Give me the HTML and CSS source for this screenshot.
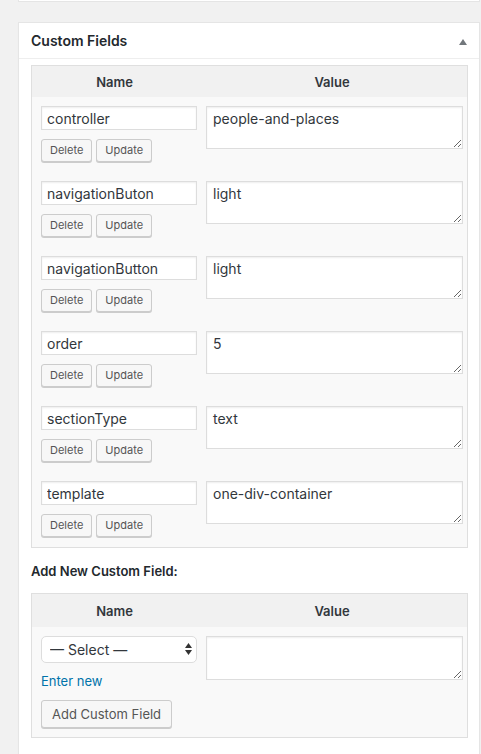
FILE: index.html
```html
<!DOCTYPE html>
<html lang="en">
<head>
<meta charset="utf-8">
<title>Custom Fields</title>
<link rel="stylesheet" href="styles.css">
</head>
<body>
<div class="topbox"></div>
<div class="postbox">
  <h2 class="hndle">
    <span>Custom Fields</span>
    <svg class="toggle" width="8" height="6" viewBox="0 0 8 6"><polygon points="0,6 4,0 8,6" fill="#72777c"/></svg>
  </h2>
  <div class="inside">
    <div class="list">
      <div class="thead"><div>Name</div><div>Value</div></div>
      <div class="row">
        <div class="left"><input class="key" type="text" value="controller"><div class="actions"><button class="btn small">Delete</button><button class="btn small">Update</button></div></div>
        <textarea class="val">people-and-places</textarea>
      </div>
      <div class="row">
        <div class="left"><input class="key" type="text" value="navigationButon"><div class="actions"><button class="btn small">Delete</button><button class="btn small">Update</button></div></div>
        <textarea class="val">light</textarea>
      </div>
      <div class="row">
        <div class="left"><input class="key" type="text" value="navigationButton"><div class="actions"><button class="btn small">Delete</button><button class="btn small">Update</button></div></div>
        <textarea class="val">light</textarea>
      </div>
      <div class="row">
        <div class="left"><input class="key" type="text" value="order"><div class="actions"><button class="btn small">Delete</button><button class="btn small">Update</button></div></div>
        <textarea class="val">5</textarea>
      </div>
      <div class="row">
        <div class="left"><input class="key" type="text" value="sectionType"><div class="actions"><button class="btn small">Delete</button><button class="btn small">Update</button></div></div>
        <textarea class="val">text</textarea>
      </div>
      <div class="row">
        <div class="left"><input class="key" type="text" value="template"><div class="actions"><button class="btn small">Delete</button><button class="btn small">Update</button></div></div>
        <textarea class="val">one-div-container</textarea>
      </div>
    </div>
    <p class="addnew">Add New Custom Field:</p>
    <div class="list">
      <div class="thead tall"><div>Name</div><div>Value</div></div>
      <div class="row new">
        <div class="left">
          <div class="selectwrap">
            <select class="sel"><option>— Select —</option></select>
            <svg class="updown" width="7" height="12" viewBox="0 0 7 12"><polygon points="0,5 3.5,0 7,5" fill="#333"/><polygon points="0,7 3.5,12 7,7" fill="#333"/></svg>
          </div>
          <a class="enternew" href="#">Enter new</a>
          <div><button class="btn">Add Custom Field</button></div>
        </div>
        <textarea class="val tall"></textarea>
      </div>
    </div>
  </div>
</div>
</body>
</html>
```

FILE: styles.css
```css
* { box-sizing: border-box; }
html, body { margin: 0; }
body {
  background: #f1f1f1;
  padding: 0 1px 0 18px;
  font-family: Inter, "Liberation Sans", sans-serif;
  color: #444;
}
.topbox {
  width: 462px;
  height: 2px;
  background: #fff;
  border: 1px solid #e5e5e5;
  border-top: 0;
}
.postbox {
  margin-top: 20px;
  width: 462px;
  background: #fff;
  border: 1px solid #e5e5e5;
  box-shadow: 0 1px 1px rgba(0,0,0,.04);
}
.hndle {
  margin: 0;
  height: 36px;
  border-bottom: 1px solid #eee;
  display: flex;
  align-items: center;
  justify-content: space-between;
  padding: 0 12px;
  font-size: 14px;
  font-weight: 600;
  color: #23282d;
}
.toggle { margin-top: 2px; }
.inside { padding: 6px 11px 30px 12px; }
.list {
  width: 437px;
  border: 1px solid #dfdfdf;
  background: #f9f9f9;
}
.thead {
  display: grid;
  grid-template-columns: 165px 1fr;
  height: 31px;
  align-items: center;
  text-align: center;
  background: #f1f1f1;
  font-size: 13px;
  font-weight: 600;
  color: #32373c;
}
.thead.tall { height: 33px; }
.row {
  display: flex;
  gap: 9px;
  height: 75px;
  padding: 9px 0 0 9px;
}
.row.new { height: auto; padding-bottom: 9px; }
.left {
  width: 156px;
  display: flex;
  flex-direction: column;
  gap: 9px;
}
.key {
  width: 156px;
  height: 24px;
  margin: 0;
  padding: 0 5px;
  border: 1px solid #ddd;
  box-shadow: inset 0 1px 2px rgba(0,0,0,.07);
  background: #fff;
  font-family: inherit;
  font-size: 14px;
  color: #32373c;
  outline: none;
}
.val {
  width: 257px;
  height: 43px;
  margin: 0;
  padding: 2px 6px;
  border: 1px solid #ddd;
  box-shadow: inset 0 1px 2px rgba(0,0,0,.07);
  background: #fff;
  font-family: inherit;
  font-size: 14px;
  line-height: 20px;
  color: #32373c;
  outline: none;
}
.val.tall { height: 44px; }
.actions { display: flex; gap: 4px; }
.btn {
  margin: 0;
  height: 28px;
  padding: 0 10px;
  border: 1px solid #ccc;
  border-radius: 3px;
  background: #f7f7f7;
  box-shadow: 0 1px 0 #ccc;
  font-family: inherit;
  font-size: 13px;
  color: #555;
  line-height: 26px;
  cursor: pointer;
}
.btn.small {
  height: 23px;
  padding: 0 8px;
  font-size: 11px;
  line-height: 21px;
}
.addnew {
  margin: 13px 0 12px;
  line-height: 20px;
  font-size: 13px;
  font-weight: 600;
  color: #23282d;
}
.new .left { gap: 0; }
.selectwrap { position: relative; width: 156px; height: 27px; }
.sel {
  appearance: none;
  -webkit-appearance: none;
  width: 156px;
  height: 27px;
  margin: 0;
  padding: 0 24px 0 8px;
  border: 1px solid #ddd;
  border-radius: 5px;
  background: #fff;
  font-family: inherit;
  font-size: 14px;
  color: #32373c;
  outline: none;
}
.updown {
  position: absolute;
  right: 5px;
  top: 7px;
  pointer-events: none;
}
.enternew {
  display: block;
  margin: 8px 0 9px;
  line-height: 20px;
  font-size: 13px;
  color: #0073aa;
  text-decoration: none;
}
```
